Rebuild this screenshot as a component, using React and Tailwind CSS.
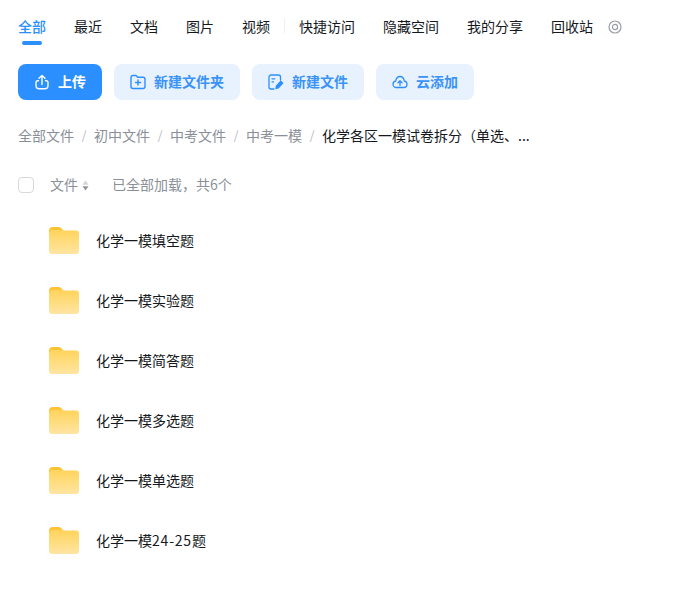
import React from 'react'

const TABS = [
  { label: '全部', active: true },
  { label: '最近' },
  { label: '文档' },
  { label: '图片' },
  { label: '视频', divider: true },
  { label: '快捷访问' },
  { label: '隐藏空间' },
  { label: '我的分享' },
  { label: '回收站' },
]

const CRUMBS = ['全部文件', '初中文件', '中考文件', '中考一模']

const FOLDERS = ['化学一模填空题', '化学一模实验题', '化学一模简答题', '化学一模多选题', '化学一模单选题', '化学一模24-25题']

function FolderIcon() {
  return (
    <svg width="30" height="27" viewBox="0 0 32 28" preserveAspectRatio="none" className="shrink-0">
      <defs>
        <linearGradient id="folderFront" x1="0" y1="0" x2="0" y2="1">
          <stop offset="0" stopColor="#ffd45c" />
          <stop offset="1" stopColor="#ffe5a3" />
        </linearGradient>
      </defs>
      <path d="M0 3.5C0 1.600 1.600 0 3.500 0H10c1.600 0 2.600.7 3.600 1.800L16 4H2v6H0Z" fill="#fdc438" />
      <path d="M0 6.500C0 5 1.200 3.600 3 3.600h26c1.700 0 3 1.300 3 3V25c0 1.700-1.300 3-3 3H3c-1.700 0-3-1.300-3-3Z" fill="url(#folderFront)" />
    </svg>
  )
}

function UploadIcon() {
  return (
    <svg width="16" height="16" viewBox="0 0 16 16" fill="none" stroke="#fff" strokeWidth="1.400" strokeLinecap="round" strokeLinejoin="round">
      <path d="M4.500 6.800H3.600C2.700 6.800 2 7.500 2 8.400v3.200C2 13.400 3.400 14.800 5.200 14.800h5.600c1.800 0 3.200-1.400 3.200-3.200V8.400c0-.9-.7-1.600-1.600-1.600h-.9" />
      <path d="M8 10.500V1.500M5 4.300 8 1.500l3 2.800" />
    </svg>
  )
}

function NewFolderIcon() {
  return (
    <svg width="16" height="16" viewBox="0 0 16 16" fill="none" stroke="#2b8fff" strokeWidth="1.400" strokeLinecap="round" strokeLinejoin="round">
      <path d="M1 3.500C1 2.400 1.900 1.500 3 1.500h3l1.700 1.800H13c1.100 0 2 .9 2 2v7.200c0 1.100-.9 2-2 2H3c-1.100 0-2-.9-2-2Z" />
      <path d="M8 6v5M5.500 8.500h5" />
    </svg>
  )
}

function NewFileIcon() {
  return (
    <svg width="16" height="16" viewBox="0 0 16 16" fill="none" stroke="#2b8fff" strokeWidth="1.300" strokeLinecap="round" strokeLinejoin="round">
      <path d="M12.500 6V3c0-1.100-.9-2-2-2H3C1.900 1 1 1.900 1 3v10c0 1.100.9 2 2 2h3" />
      <path d="M4 4.800h2.800M4 7.800h1.500" />
      <path d="m8 14.500.5-2.500 4.300-4.700 1.900 1.800-4.300 4.700Z" fill="#2b8fff" />
    </svg>
  )
}

function CloudIcon() {
  return (
    <svg width="16" height="16" viewBox="0 0 16 16" fill="none" stroke="#2b8fff" strokeWidth="1.300" strokeLinecap="round" strokeLinejoin="round">
      <path d="M4.300 13.500C2.400 13.500 1 12 1 10.200c0-1.600 1.100-2.900 2.700-3.200C4.200 4.200 6 2.500 8 2.500s3.800 1.700 4.300 4.500c1.600.3 2.700 1.600 2.700 3.200 0 1.800-1.400 3.300-3.300 3.300Z" />
      <path d="M8 11.500V7M6 8.800 8 6.800l2 2" />
    </svg>
  )
}

function SortIcon() {
  return (
    <svg width="7" height="11" viewBox="0 0 7 11" className="ml-[4px] mt-[2px]">
      <path d="M3.500 0.500 6.500 4.700H0.500Z" fill="#d0d3d8" />
      <path d="M3.500 10.500 0.500 6.300h6Z" fill="#8f949c" />
    </svg>
  )
}

function ActionButton({ icon, label, primary, width }) {
  return (
    <button
      type="button"
      className={`h-9 rounded-lg flex items-center justify-center gap-2 text-sm font-bold ${width} ${
        primary ? 'bg-[#2b8fff] text-white' : 'bg-[#e8f2ff] text-[#3b93f5]'
      }`}
    >
      {icon}
      <span className="pb-[2px]">{label}</span>
    </button>
  )
}

export default function App() {
  return (
    <div
      className="w-[690px] h-[600px] bg-white overflow-hidden px-[18px]"
      style={{ fontFamily: '"Noto Sans CJK SC", "Liberation Sans", sans-serif' }}
    >
      <div className="flex items-start h-[64px] pt-4 text-sm leading-5 text-[#15181d]">
        {TABS.map(({ label, active, divider }) => (
          <React.Fragment key={label}>
            <div className={`relative mr-7 ${active ? 'text-[#2b8fff] font-medium' : ''}`}>
              {label}
              {active && <span className="absolute left-1 top-[25px] w-5 h-1 rounded-full bg-[#2b8fff]" />}
            </div>
            {divider && <span className="w-px h-[14px] bg-[#eeeff1] mt-[3px] mr-[14px] -ml-[14px]" />}
          </React.Fragment>
        ))}
        <svg width="14" height="14" viewBox="0 0 14 14" fill="none" className="-ml-[13px] mt-[4px]" stroke="#9a9ea5">
          <circle cx="7" cy="7" r="6" strokeWidth="1.200" />
          <circle cx="7" cy="7" r="2.600" strokeWidth="1.200" />
        </svg>
      </div>

      <div className="flex gap-3">
        <ActionButton primary width="w-[84px]" icon={<UploadIcon />} label="上传" />
        <ActionButton width="w-[126px]" icon={<NewFolderIcon />} label="新建文件夹" />
        <ActionButton width="w-[112px]" icon={<NewFileIcon />} label="新建文件" />
        <ActionButton width="w-[98px]" icon={<CloudIcon />} label="云添加" />
      </div>

      <div className="flex items-center mt-[25px] h-5 text-sm text-[#8a8f98]">
        {CRUMBS.map(c => (
          <React.Fragment key={c}>
            <span>{c}</span>
            <span className="w-5 text-center text-[#b4b8bf] text-xs">/</span>
          </React.Fragment>
        ))}
        <span className="text-[#15181d]">化学各区一模试卷拆分（单选、...</span>
      </div>

      <div className="flex items-center mt-[29px] h-5 text-sm text-[#8a8f98]">
        <span className="w-4 h-4 rounded-[4px] border border-[#d5d8dc] bg-white mt-px" />
        <span className="ml-4">文件</span>
        <SortIcon />
        <span className="ml-[23px]">已全部加载，共6个</span>
      </div>

      <div className="mt-4">
        {FOLDERS.map(name => (
          <div key={name} className="flex items-center h-[60px] pl-[31px] gap-[17px] text-sm text-[#15181d]">
            <FolderIcon />
            <span>
              {name.split(/(\d+-\d+)/).map((part, i) =>
                i === 1 ? <span key={part} className="tracking-[0.8px]">{part}</span> : part
              )}
            </span>
          </div>
        ))}
      </div>
    </div>
  )
}
